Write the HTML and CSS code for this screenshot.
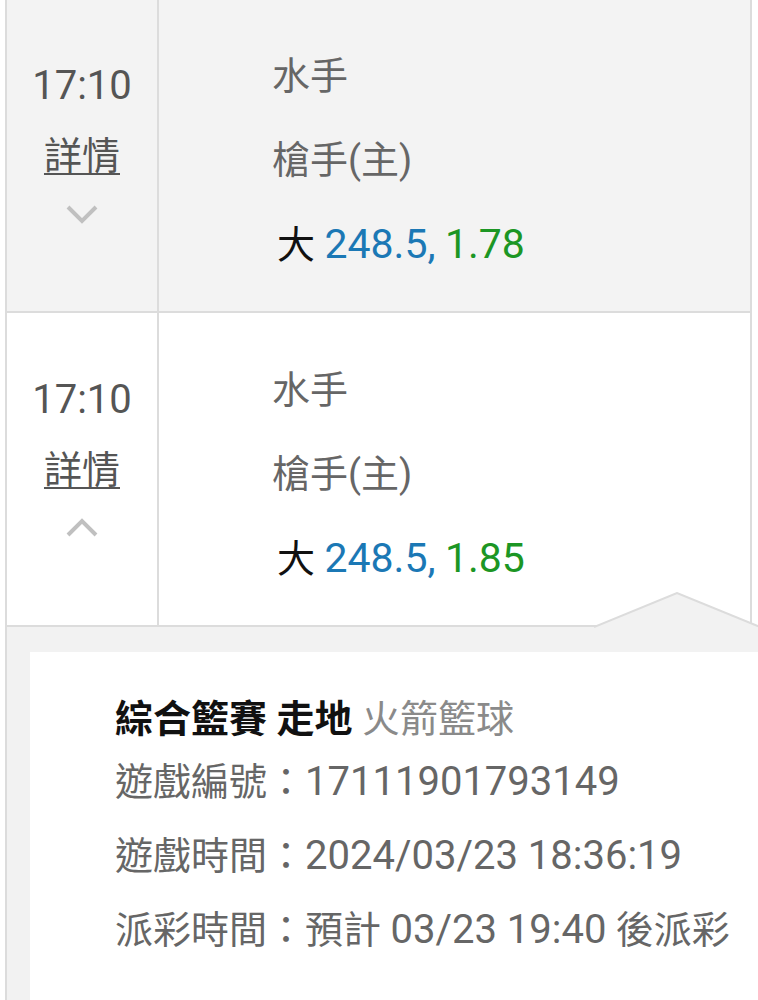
FILE: index.html
```html
<!DOCTYPE html>
<html lang="zh-Hant">
<head>
    <meta charset="UTF-8">
    <meta name="viewport" content="width=device-width, initial-scale=1.0">
    <title>注單</title>
    <link rel="stylesheet" href="styles.css">
</head>
<body>
<div class="bet-list">
    <div class="bet-row bet-row-first">
        <div class="bet-time">
            <div class="time-text">17:10</div>
            <a class="detail-link">詳情</a>
            <svg class="chevron" width="34" height="20" viewBox="0 0 34 20">
                <polyline points="3,3 17,17 31,3" fill="none" stroke="#c0c0c0" stroke-width="4"/>
            </svg>
        </div>
        <div class="bet-info">
            <div class="info-line">水手</div>
            <div class="info-line">槍手(主)</div>
            <div class="info-line odds-line">大 <span class="num odds-point">248.5,</span> <span class="num odds-value">1.78</span></div>
        </div>
    </div>
    <div class="bet-row bet-row-open">
        <div class="bet-time">
            <div class="time-text">17:10</div>
            <a class="detail-link">詳情</a>
            <svg class="chevron" width="34" height="20" viewBox="0 0 34 20">
                <polyline points="3,17 17,3 31,17" fill="none" stroke="#c0c0c0" stroke-width="4"/>
            </svg>
        </div>
        <div class="bet-info">
            <div class="info-line">水手</div>
            <div class="info-line">槍手(主)</div>
            <div class="info-line odds-line">大 <span class="num odds-point">248.5,</span> <span class="num odds-value">1.85</span></div>
        </div>
    </div>
    <div class="bet-detail">
        <svg class="notch" width="166" height="36" viewBox="0 0 166 36">
            <polygon points="0,35 83,1 166,35 166,36 0,36" fill="#f2f2f2"/>
            <polyline points="0,35 83,1 166,35" fill="none" stroke="#dcdcdc" stroke-width="2"/>
        </svg>
        <div class="detail-card">
            <div class="detail-title"><b>綜合籃賽 走地</b> <span class="team-name">火箭籃球</span></div>
            <div class="detail-line">遊戲編號：<span class="num">17111901793149</span></div>
            <div class="detail-line">遊戲時間：<span class="num">2024/03/23 18:36:19</span></div>
            <div class="detail-line">派彩時間：預計 <span class="num">03/23 19:40</span> 後派彩</div>
        </div>
    </div>
</div>
</body>
</html>
```

FILE: styles.css
```css
body {
    margin: 0;
    background-color: #fff;
    font-family: Roboto, "Noto Sans CJK TC", sans-serif;
    overflow: hidden;
}

.num {
    font-size: 40px;
}

.bet-list {
    margin-left: 5px;
    border-left: 2px solid #dcdcdc;
}

.bet-row {
    display: flex;
    height: 312px;
    margin-right: 6px;
    border-right: 2px solid #dcdcdc;
    border-bottom: 2px solid #dcdcdc;
}
.bet-row-first {
    margin-top: -1px;
    background-color: #f3f3f3;
}
.bet-row-open {
    background-color: #fff;
}

.bet-time {
    width: 150px;
    border-right: 2px solid #dcdcdc;
    display: flex;
    flex-direction: column;
    align-items: center;
    padding-top: 52px;
    color: #555;
}
.time-text {
    font-size: 40px;
    line-height: 70px;
}
.detail-link {
    font-size: 38px;
    line-height: 70px;
    text-decoration: underline;
    text-decoration-thickness: 2px;
    text-underline-offset: 4px;
}
.chevron {
    display: block;
    margin-top: 13px;
}

.bet-info {
    flex: 1;
    padding: 35px 0 0 113px;
    color: #666;
}
.info-line {
    font-size: 38px;
    line-height: 84px;
}
.odds-line {
    padding-left: 5px;
    color: #111;
}
.odds-point {
    font-size: 41px;
    color: #1b78b5;
}
.odds-value {
    font-size: 41px;
    color: #1c9624;
}

.bet-detail {
    position: relative;
    background-color: #f2f2f2;
    padding: 25px 0 0 23px;
}
.notch {
    position: absolute;
    left: 587px;
    top: -35px;
}

.detail-card {
    background-color: #fff;
    padding: 41px 0 40px 85px;
    color: #666;
}
.detail-title {
    font-size: 38px;
    line-height: 52px;
    color: #111;
}
.team-name {
    color: #8a8a8a;
}
.detail-line {
    font-size: 38px;
    line-height: 74px;
}
```
